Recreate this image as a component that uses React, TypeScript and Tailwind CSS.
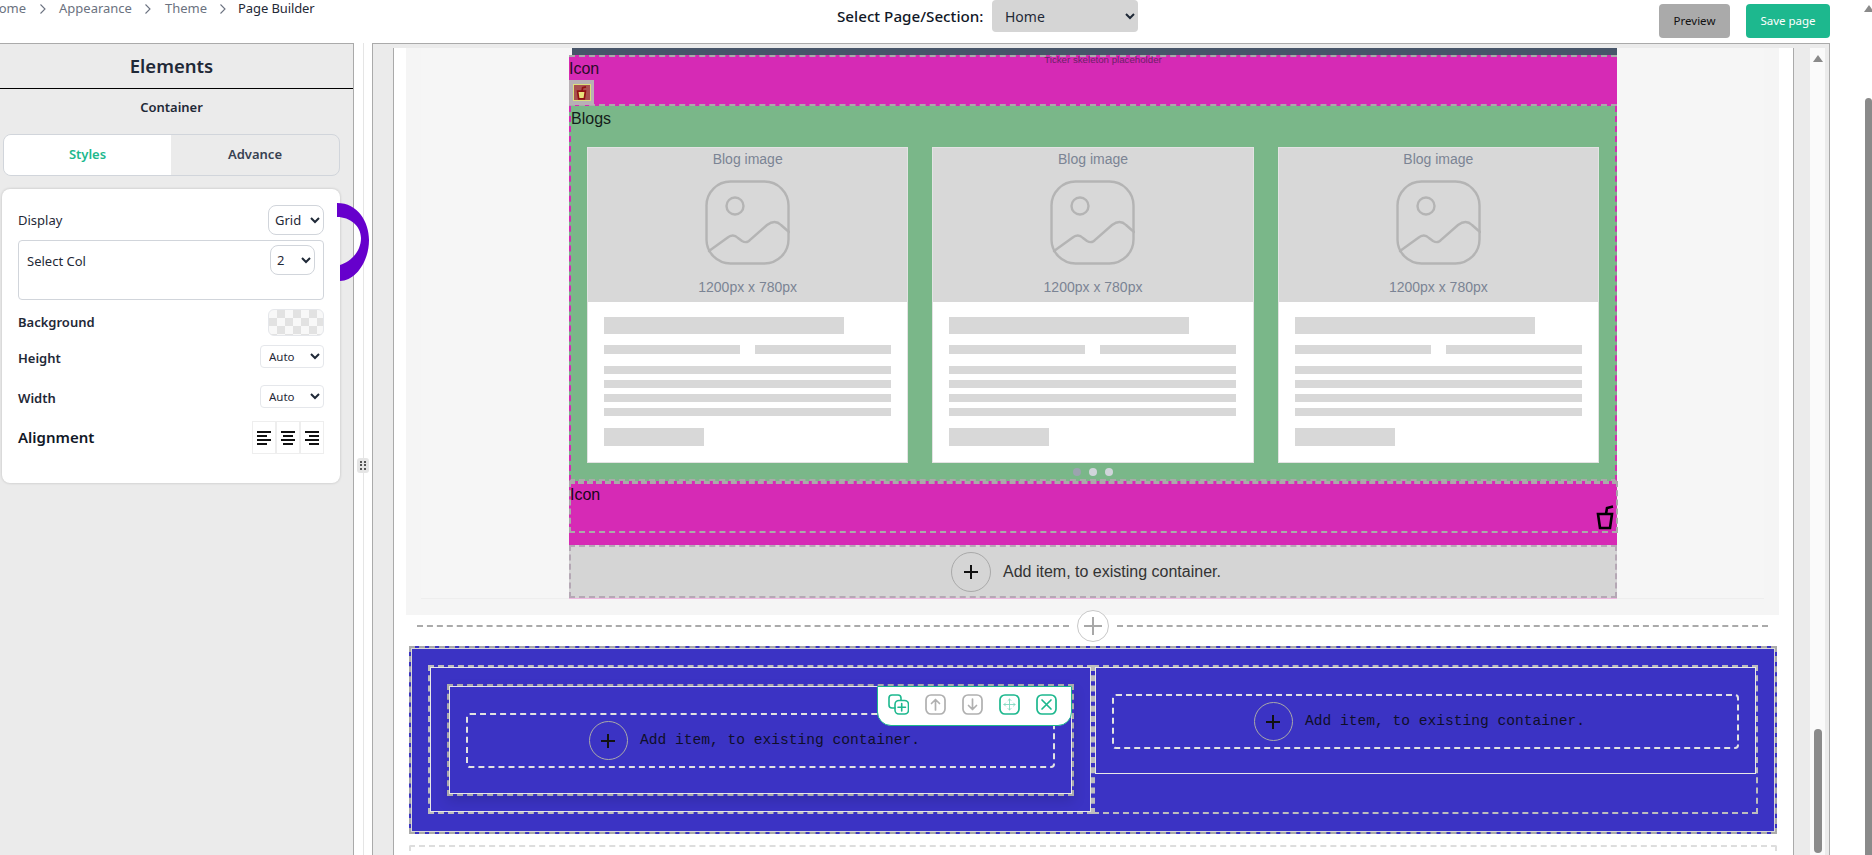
import type { ReactNode } from "react"

const SANS = "font-['Noto_Sans',sans-serif]"
const ARIAL = "font-['Liberation_Sans',Arial,sans-serif]"

function Chevron({ className = "w-[33px]" }: { className?: string }) {
  return (
    <span className={`flex justify-center text-[#6b7280] ${className}`}>
      <svg width="8" height="12" viewBox="0 0 8 12" fill="none" stroke="currentColor" strokeWidth="1.1">
        <path d="M1.5 1.5 6 6l-4.5 4.5" />
      </svg>
    </span>
  )
}

function TopBar() {
  return (
    <div className={`h-[43px] flex items-start text-[13px] ${SANS}`}>
      <div className="w-[835px] h-[18px] flex items-center -ml-[11px] shrink-0 text-[#6b7280]">
        <span>Home</span>
        <Chevron />
        <span>Appearance</span>
        <Chevron />
        <span>Theme</span>
        <Chevron className="w-[31px]" />
        <span className="text-[13px] tracking-[-0.1px] text-[#1f2937]">Page Builder</span>
      </div>
      <div className="flex items-center h-[32px] ml-[13px]">
        <span className="w-[155px] text-[15.2px] font-medium text-[#111827]">Select Page/Section:</span>
        <select className="w-[146px] h-[32px] bg-[#d5d5d5] rounded-[4px] pl-[9px] text-sm text-[#1f2937]">
          <option>Home</option>
        </select>
      </div>
      <button className="ml-[521px] mt-[4px] w-[71px] h-[34px] bg-[#aaaaaa] rounded-[4px] text-[11.5px] text-[#111]">Preview</button>
      <button className="ml-[16px] mt-[4px] w-[84px] h-[34px] bg-[#1db88e] rounded-[4px] text-[11.5px] text-white">Save page</button>
    </div>
  )
}

function SmallSelect({ value, className }: { value: string; className: string }) {
  return (
    <select className={`bg-white border border-[#d1d5db] text-[#1f2937] ${className}`}>
      <option>{value}</option>
    </select>
  )
}

function AlignIcon({ side }: { side: "left" | "center" | "right" }) {
  const x = side === "left" ? 0 : side === "center" ? 2 : 4
  return (
    <span className="w-[24px] h-[33px] border border-[#eeeeee] flex items-center justify-center">
      <svg width="14" height="14" viewBox="0 0 14 14" fill="#111">
        <rect x="0" y="0" width="14" height="2" />
        <rect x={x} y="4" width="10" height="2" />
        <rect x="0" y="8" width="14" height="2" />
        <rect x={x} y="12" width="10" height="2" />
      </svg>
    </span>
  )
}

function LeftPanel() {
  return (
    <aside className={`w-[354px] shrink-0 border-t border-r border-[#aaaaaa] bg-[#ebebeb] ${SANS}`}>
      <div className="h-[45px] border-b border-black flex items-center justify-center text-[18.5px] font-semibold text-[#1f2937] pr-[10px]">
        Elements
      </div>
      <div className="h-[45px] flex items-center justify-center text-[13px] font-semibold text-[#1f2937] pb-[8px] pr-[10px]">Container</div>
      <div className="ml-[3px] w-[337px] h-[42px] flex border border-[#d1d5db] rounded-lg overflow-hidden text-[13px] font-semibold">
        <div className="w-[167px] bg-white text-[#1db88e] flex items-center justify-center">Styles</div>
        <div className="flex-1 text-[#374151] flex items-center justify-center">Advance</div>
      </div>
      <div className="mt-[13px] ml-[2px] w-[338px] h-[294px] bg-white rounded-lg shadow-[0_0_3px_rgba(0,0,0,0.2)] px-[16px] pt-[16px] text-[#1f2937]">
        <div className="h-[30px] flex items-center justify-between text-[13px]">
          <span className="mt-[2px]">Display</span>
          <SmallSelect value="Grid" className="w-[56px] h-[30px] rounded-lg pl-[2px] text-[13px]" />
        </div>
        <div className="mt-[5px] h-[60px] border border-[#d1d5db] rounded-[4px] pl-[8px] pr-[8px] pt-[4px] flex justify-between text-[13px]">
          <span className="mt-[7px]">Select Col</span>
          <SmallSelect value="2" className="w-[45px] h-[30px] rounded-lg pl-[2px] text-[13px]" />
        </div>
        <div className="mt-[9px] h-[27px] flex items-center justify-between text-[13px] font-semibold">
          <span>Background</span>
          <span className="w-[56px] h-[27px] rounded-md border border-[#e5e7eb] bg-[repeating-conic-gradient(#e2e2e2_0%_25%,#f8f8f8_0%_50%)] bg-size-[16px_16px]" />
        </div>
        <div className="mt-[9px] h-[23px] flex items-center justify-between text-[13px] font-semibold">
          <span className="mt-[5px]">Height</span>
          <SmallSelect value="Auto" className="w-[64px] h-[23px] rounded-[4px] pl-[4px] text-[11.5px] font-normal border-[#e5e7eb]" />
        </div>
        <div className="mt-[17px] h-[23px] flex items-center justify-between text-[13px] font-semibold">
          <span className="mt-[5px]">Width</span>
          <SmallSelect value="Auto" className="w-[64px] h-[23px] rounded-[4px] pl-[4px] text-[11.5px] font-normal border-[#e5e7eb]" />
        </div>
        <div className="mt-[13px] h-[33px] flex items-center justify-between text-[15px] font-semibold text-[#111827]">
          <span>Alignment</span>
          <span className="flex">
            <AlignIcon side="left" />
            <AlignIcon side="center" />
            <AlignIcon side="right" />
          </span>
        </div>
      </div>
    </aside>
  )
}

function Splitter() {
  return (
    <div className="w-[18px] shrink-0 relative flex justify-center">
      <div className="w-px bg-[#e5e5e5]" />
      <div className="absolute left-[3px] top-[415px] w-[12px] h-[15px] rounded-[3px] bg-[#e5e5e5] grid grid-cols-2 gap-[1px] p-[3px] place-items-center">
        {[0, 1, 2, 3, 4, 5].map((i) => (
          <span key={i} className="w-[2px] h-[2px] bg-[#555]" />
        ))}
      </div>
    </div>
  )
}

function PhotoIcon() {
  return (
    <svg width="85" height="85" viewBox="0 0 85 85" fill="none" stroke="#b4b4b4" strokeWidth="2.4" strokeLinecap="round">
      <rect x="1.5" y="1.5" width="82" height="82" rx="24" />
      <circle cx="30" cy="26" r="8.5" />
      <path d="M4 71 22 58Q28 53 33 58L37 61Q42 64 46 59L62 45Q70 39 76 45L84 52" />
    </svg>
  )
}

function Bar({ className }: { className: string }) {
  return <div className={`bg-[#d8d8d8] ${className}`} />
}

function BlogCard() {
  return (
    <div className="h-[316px] bg-white border border-[#e3e3e3]">
      <div className={`h-[154px] bg-[#d8d8d8] flex flex-col items-center pt-[3px] text-sm text-[#7b8494] ${ARIAL}`}>
        <span className="h-[16px] leading-[16px]">Blog image</span>
        <div className="mt-[13px]">
          <PhotoIcon />
        </div>
        <span className="mt-[14px] h-[16px] leading-[16px]">1200px x 780px</span>
      </div>
      <div className="px-[16px] pt-[15px]">
        <Bar className="w-[240px] h-[17px]" />
        <div className="mt-[11px] flex gap-[15px]">
          <Bar className="w-[136px] h-[9px]" />
          <Bar className="w-[136px] h-[9px]" />
        </div>
        <div className="mt-[12px] flex flex-col gap-[6px]">
          <Bar className="w-[287px] h-[8px]" />
          <Bar className="w-[287px] h-[8px]" />
          <Bar className="w-[287px] h-[8px]" />
          <Bar className="w-[287px] h-[8px]" />
        </div>
        <Bar className="mt-[12px] w-[100px] h-[18px]" />
      </div>
    </div>
  )
}

function PlusCircle({ size }: { size: string }) {
  return (
    <span className={`${size} rounded-full border border-[#a9a9a9] flex items-center justify-center shrink-0`}>
      <svg width="14" height="14" viewBox="0 0 14 14" stroke="#111" strokeWidth="2">
        <path d="M7 0v14M0 7h14" />
      </svg>
    </span>
  )
}

function AddBox() {
  return (
    <div className="border-2 border-dashed border-[#e2e2e2] rounded-[4px] h-[55px] flex items-center justify-center gap-[12px] pr-[12px]">
      <PlusCircle size="w-[39px] h-[39px]" />
      <span className="font-['Liberation_Mono',monospace] text-[14.6px] text-[#0f0f2a]">Add item, to existing container.</span>
    </div>
  )
}

function SquareIcon({ color, children }: { color: string; children: ReactNode }) {
  return (
    <svg width="21" height="21" viewBox="0 0 21 21" fill="none" stroke={color} strokeWidth="1.7" strokeLinecap="round" strokeLinejoin="round">
      <rect x="1" y="1" width="19" height="19" rx="5" />
      {children}
    </svg>
  )
}

function Toolbar() {
  const teal = "#1db88e"
  const gray = "#b0b0b0"
  return (
    <div className="absolute top-0 right-0 z-10 w-[195px] h-[40px] bg-white border border-[#1db88e] rounded-b-[14px] flex items-center pl-[10px] pb-[3px] gap-[16px]">
      <svg width="21" height="21" viewBox="0 0 21 21" fill="none" stroke={teal} strokeWidth="1.6" strokeLinecap="round">
        <path d="M7 14H4a3 3 0 0 1-3-3V4a3 3 0 0 1 3-3h6a3 3 0 0 1 3 3v2" />
        <rect x="7" y="6.5" width="13.5" height="13.5" rx="4" />
        <path d="M13.7 9.5v7.5M10 13.3h7.5" />
      </svg>
      <SquareIcon color={gray}>
        <path d="M10.5 16V5.5M6.5 9.5l4-4 4 4" />
      </SquareIcon>
      <SquareIcon color={gray}>
        <path d="M10.5 5v10.5M6.5 11.5l4 4 4-4" />
      </SquareIcon>
      <SquareIcon color={teal}>
        <path d="M10.5 5v11M5 10.5h11M9 6.5l1.5-1.5 1.5 1.5M9 14.5l1.5 1.5 1.5-1.5M6.5 9 5 10.5 6.5 12M14.5 9l1.5 1.5-1.5 1.5" strokeWidth="0.9" stroke="#7fd9c0" />
      </SquareIcon>
      <SquareIcon color={teal}>
        <path d="M6 6l9 9M15 6l-9 9" />
      </SquareIcon>
    </div>
  )
}

function Cup({ className }: { className: string }) {
  return (
    <svg className={className} viewBox="0 0 18 25" fill="none" stroke="#000" strokeWidth="2.6" strokeLinejoin="miter">
      <path d="M2 9h14l-2 14H4Z" />
      <path d="M10 9l1-6 6-1.5" />
    </svg>
  )
}

function SectionOne() {
  return (
    <div className="h-[567px] bg-[#f5f5f5] px-[15px] pb-[16px]">
      <div className="h-[551px] bg-[#f6f6f6] border-b border-[#eeeeee] pl-[148px]">
        <div className={`w-[1048px] flex flex-col text-black ${ARIAL}`}>
          <div className="h-[7px] ml-[3px] bg-[#475569]" />
          <div className="h-[51px] bg-[#d62ab5] border-y-2 border-dashed border-[#aaaaaa] relative">
            <p className="absolute left-[20px] right-0 -top-[2px] text-center text-[9.7px] leading-[10px] text-[#6e2168]">Ticker skeleton placeholder</p>
            <p className="text-base leading-[18px] mt-[3px] text-[#2a0a28]">Icon</p>
            <div className="mt-[2px] w-[25px] h-[25px] bg-[#b8b0b5] flex items-center justify-center">
              <div className="w-[18px] h-[17px] bg-[#a85050] border border-[#dbe07c] flex items-center justify-center">
                <svg width="11" height="14" viewBox="0 0 18 25" fill="#e8e27a" stroke="#8f1212" strokeWidth="3">
                  <path d="M2 9h14l-2 14H4Z" />
                  <path d="M10 9l1-6 6-1.5" fill="none" />
                </svg>
              </div>
            </div>
          </div>
          <div className="h-[375px] bg-[#7ab789] border-x-2 border-b-2 border-dashed border-x-[#d62ab5] border-b-[#aaaaaa]">
            <p className="text-base leading-[18px] mt-[4px] text-[#14201a]">Blogs</p>
            <div className="mt-[19px] px-[16px] grid grid-cols-3 gap-[24px]">
              <BlogCard />
              <BlogCard />
              <BlogCard />
            </div>
            <div className="mt-[5px] flex justify-center gap-[8px]">
              <span className="w-[8px] h-[8px] rounded-full bg-[#9ca3af]" />
              <span className="w-[8px] h-[8px] rounded-full bg-[#d1d5db]" />
              <span className="w-[8px] h-[8px] rounded-full bg-[#d1d5db]" />
            </div>
          </div>
          <div className="h-[64px] bg-[#d62ab5]">
            <div className="h-[52px] border-x-2 border-b-2 border-t-[3px] border-dashed border-[#aaaaaa] flex justify-between -mr-[1px]">
              <p className="text-base leading-[18px] mt-[2px] text-[#1a0518] -ml-[1px]">Icon</p>
              <Cup className="w-[18px] h-[25px] mt-[21px] mr-[2px] shrink-0" />
            </div>
          </div>
          <div className="h-[53px] bg-[#d5d5d5] border-2 border-dashed border-[#b5a8b5] shadow-[0_1px_0_#eeb8e0] flex items-center justify-center gap-[12px] pr-[14px]">
            <PlusCircle size="w-[40px] h-[40px]" />
            <span className="text-base text-[#333333]">Add item, to existing container.</span>
          </div>
        </div>
      </div>
    </div>
  )
}

function Divider() {
  return (
    <div className="relative -mt-[5px] h-[36px] flex items-start">
      <div className="ml-[11px] mt-[15px] w-[652px] border-t-2 border-dashed border-[#aaaaaa]" />
      <span className="ml-[8px] w-[32px] h-[32px] rounded-full bg-white border border-[#c8c8c8] flex items-center justify-center shrink-0">
        <svg width="18" height="18" viewBox="0 0 18 18" stroke="#a8a8a8" strokeWidth="2">
          <path d="M9 0v18M0 9h18" />
        </svg>
      </span>
      <div className="ml-[8px] mt-[15px] w-[651px] border-t-2 border-dashed border-[#aaaaaa]" />
    </div>
  )
}

function BlueSection() {
  return (
    <div className="ml-[3px] w-[1368px] h-[188px] bg-[#3b33c4] border-2 border-dashed border-[#aaaaaa]">
      <div className="h-full border border-[#d9d9d9] px-[16px] pt-[16px] grid grid-cols-2 content-start">
        <div className="h-[149px] border-2 border-dashed border-[#bdbdbd]">
          <div className="h-full border border-[#e8e8e8] px-[16px] pt-[16px]">
            <div className="relative h-[112px] border-2 border-dashed border-[#aaaaaa] shadow-[0_6px_12px_rgba(0,0,0,0.12)]">
              <div className="h-full border border-[#e8e8e8] px-[16px] pt-[26px]">
                <AddBox />
              </div>
              <Toolbar />
            </div>
          </div>
        </div>
        <div className="h-[149px] border-2 border-dashed border-[#bdbdbd]">
          <div className="h-[107px] border border-[#e8e8e8] px-[16px] pt-[26px]">
            <AddBox />
          </div>
        </div>
      </div>
    </div>
  )
}

function Canvas() {
  return (
    <div className="w-[1401px] shrink-0 overflow-hidden bg-white border-x border-[#aaaaaa] pl-[12px]">
      <div className="w-[1373px]">
        <SectionOne />
        <Divider />
        <BlueSection />
        <div className="ml-[3px] mt-[11px] w-[1368px] h-[60px] border-2 border-dashed border-[#dddddd] rounded-[2px]" />
      </div>
    </div>
  )
}

function ArrowUp() {
  return (
    <svg width="10" height="7" viewBox="0 0 10 7" fill="#8a8a8a" className="shrink-0">
      <path d="M5 0l5 7H0Z" />
    </svg>
  )
}

function Frame() {
  return (
    <div className="w-[1458px] shrink-0 border-t border-x border-[#aaaaaa] bg-[#ebebeb] pt-[4px] pl-[20px] flex">
      <Canvas />
      <div className="ml-[16px] w-[15px] bg-[#fafafa] flex flex-col items-center pt-[7px] pb-[2px] shrink-0">
        <ArrowUp />
        <div className="mt-auto w-[8px] h-[124px] rounded-full bg-[#8a8a8a]" />
      </div>
    </div>
  )
}

export default function App() {
  return (
    <div className="relative w-full h-[855px] overflow-hidden bg-white flex">
      <div className="w-[1864px] shrink-0 flex flex-col">
        <TopBar />
        <div className="h-[812px] flex">
          <LeftPanel />
          <Splitter />
          <Frame />
        </div>
      </div>
      <div className="ml-auto w-[7px] flex flex-col items-center pt-[5px]">
        <ArrowUp />
        <div className="mt-[86px] flex-1 rounded-t-full bg-[#8a8a8a] w-full" />
      </div>
      <svg className="absolute left-[330px] top-[198px] z-20" width="45" height="90" viewBox="330 198 45 90" fill="#6600cc">
        <path d="M337 203C358 203 369 222 369 240C369 262 355 281 340 281L340 265C350 262 361 252 361 238C361 226 350 217 337 217Z" />
      </svg>
    </div>
  )
}
